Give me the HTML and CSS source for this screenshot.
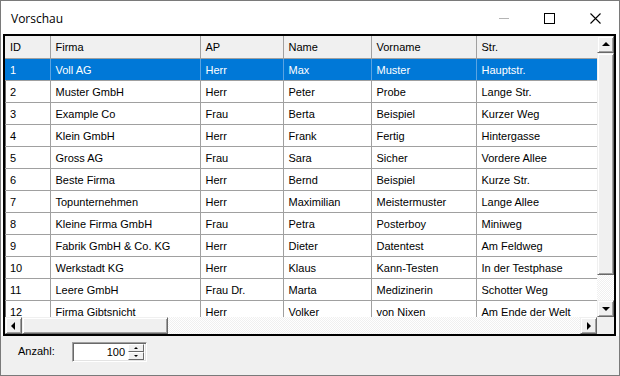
FILE: index.html
```html
<!DOCTYPE html>
<html lang="de">
<head>
  <meta charset="UTF-8">
  <title>Vorschau</title>
  <link rel="stylesheet" href="styles.css">
</head>
<body>
  <div class="fenster">
    <!-- Titelleiste -->
    <div class="titel">
      <span class="titel-text">Vorschau</span>
      <div class="knoepfe">
        <svg class="knopf" width="46" height="32" viewBox="0 0 46 32"><path d="M18 17.5h10" stroke="#b4b4b4" stroke-width="1"/></svg>
        <svg class="knopf" width="46" height="32" viewBox="0 0 46 32"><rect x="17.5" y="12.5" width="10" height="10" fill="none" stroke="#000" stroke-width="1"/></svg>
        <svg class="knopf" width="46" height="32" viewBox="0 0 46 32"><path d="M17.5 12.5l10 10M27.5 12.5l-10 10" stroke="#000" stroke-width="1.1"/></svg>
      </div>
    </div>

    <div class="inhalt">
      <div class="tabelle-rahmen">
        <div class="tabelle">
          <div class="ansicht">
            <table>
              <colgroup>
                <col style="width:45px"><col style="width:150px"><col style="width:83px">
                <col style="width:88px"><col style="width:105px"><col style="width:150px">
              </colgroup>
              <thead>
                <tr><th>ID</th><th>Firma</th><th>AP</th><th>Name</th><th>Vorname</th><th>Str.</th></tr>
              </thead>
              <tbody>
                <tr class="aktiv"><td>1</td><td>Voll AG</td><td>Herr</td><td>Max</td><td>Muster</td><td>Hauptstr.</td></tr>
                <tr><td>2</td><td>Muster GmbH</td><td>Herr</td><td>Peter</td><td>Probe</td><td>Lange Str.</td></tr>
                <tr><td>3</td><td>Example Co</td><td>Frau</td><td>Berta</td><td>Beispiel</td><td>Kurzer Weg</td></tr>
                <tr><td>4</td><td>Klein GmbH</td><td>Herr</td><td>Frank</td><td>Fertig</td><td>Hintergasse</td></tr>
                <tr><td>5</td><td>Gross AG</td><td>Frau</td><td>Sara</td><td>Sicher</td><td>Vordere Allee</td></tr>
                <tr><td>6</td><td>Beste Firma</td><td>Herr</td><td>Bernd</td><td>Beispiel</td><td>Kurze Str.</td></tr>
                <tr><td>7</td><td>Topunternehmen</td><td>Herr</td><td>Maximilian</td><td>Meistermuster</td><td>Lange Allee</td></tr>
                <tr><td>8</td><td>Kleine Firma GmbH</td><td>Frau</td><td>Petra</td><td>Posterboy</td><td>Miniweg</td></tr>
                <tr><td>9</td><td>Fabrik GmbH &amp; Co. KG</td><td>Herr</td><td>Dieter</td><td>Datentest</td><td>Am Feldweg</td></tr>
                <tr><td>10</td><td>Werkstadt KG</td><td>Herr</td><td>Klaus</td><td>Kann-Testen</td><td>In der Testphase</td></tr>
                <tr><td>11</td><td>Leere GmbH</td><td>Frau Dr.</td><td>Marta</td><td>Medizinerin</td><td>Schotter Weg</td></tr>
                <tr><td>12</td><td>Firma Gibtsnicht</td><td>Herr</td><td>Volker</td><td>von Nixen</td><td>Am Ende der Welt</td></tr>
              </tbody>
            </table>
          </div>

          <!-- senkrechte Bildlaufleiste -->
          <div class="vscroll">
            <div class="sbtn"><span class="pfeil hoch"></span></div>
            <div class="vdaumen"></div>
            <div class="spur"></div>
            <div class="sbtn"><span class="pfeil runter"></span></div>
          </div>

          <!-- waagerechte Bildlaufleiste -->
          <div class="hscroll">
            <div class="sbtn"><span class="pfeil links"></span></div>
            <div class="hdaumen"></div>
            <div class="spur"></div>
            <div class="sbtn"><span class="pfeil rechts"></span></div>
          </div>
          <div class="ecke"></div>
        </div>
      </div>

      <!-- untere Leiste -->
      <div class="leiste">
        <span class="label">Anzahl:</span>
        <div class="spin">
          <span class="wert">100</span>
          <div class="spin-knoepfe">
            <div class="spin-knopf"><span class="mini hoch"></span></div>
            <div class="spin-knopf"><span class="mini runter"></span></div>
          </div>
        </div>
      </div>
    </div>
  </div>
</body>
</html>
```

FILE: styles.css
```css
body {
  margin: 0;
  background: #fff;
  font-family: "Liberation Sans", Arial, sans-serif;
}

.fenster {
  width: 620px;
  height: 376px;
  box-sizing: border-box;
  border: 1px solid #7a7a7a;
  background: #fff;
  display: flex;
  flex-direction: column;
}

/* Titelleiste */
.titel {
  height: 32px;
  display: flex;
  align-items: center;
  justify-content: space-between;
  flex-shrink: 0;
}

.titel-text {
  font-family: "Open Sans", "Noto Sans", sans-serif;
  font-size: 12px;
  color: #000;
  padding-left: 10px;
  padding-top: 3px;
}

.knoepfe {
  display: flex;
}

.knopf {
  display: block;
}

.inhalt {
  flex: 1;
  display: flex;
  flex-direction: column;
}

.tabelle-rahmen {
  padding: 1px 3px 0 2px;
}

.tabelle {
  height: 298px;
  border: 2px solid #000;
  box-shadow: inset 1px 1px #696969;
  display: grid;
  grid-template-columns: 1fr 17px;
  grid-template-rows: 1fr 17px;
  background: #fff;
}

.ansicht {
  overflow: hidden;
  min-width: 0;
}

table {
  border-collapse: collapse;
  table-layout: fixed;
  width: 621px;
  font-size: 11px;
  color: #000;
}

th, td {
  height: 22px;
  padding: 0 0 0 5px;
  text-align: left;
  white-space: nowrap;
  overflow: hidden;
  border-right: 1px solid #a0a0a0;
  border-bottom: 1px solid #a0a0a0;
  box-sizing: border-box;
}

th {
  background: #f0f0f0;
  font-weight: normal;
  padding-top: 1px;
}

td {
  padding-top: 1px;
}

tr.aktiv td {
  background: #0078d7;
  color: #fff;
  border-right-color: #5ba4e2;
}

/* Bildlaufleisten */
.vscroll {
  display: flex;
  flex-direction: column;
}

.hscroll {
  display: flex;
}

.sbtn {
  width: 17px;
  height: 17px;
  box-sizing: border-box;
  background: #f0f0f0;
  border: 1px solid;
  border-color: #f0f0f0 #696969 #696969 #f0f0f0;
  box-shadow: inset 1px 1px #fff, inset -1px -1px #a0a0a0;
  display: flex;
  align-items: center;
  justify-content: center;
  flex-shrink: 0;
}

.vdaumen {
  height: 222px;
  background: #f0f0f0;
  box-sizing: border-box;
  border: 1px solid;
  border-color: #f0f0f0 #696969 #696969 #f0f0f0;
  box-shadow: inset 1px 1px #fff, inset -1px -1px #a0a0a0;
}

.hdaumen {
  width: 146px;
  background: #f0f0f0;
  box-sizing: border-box;
  border: 1px solid;
  border-color: #f0f0f0 #696969 #696969 #f0f0f0;
  box-shadow: inset 1px 1px #fff, inset -1px -1px #a0a0a0;
}

.spur {
  flex: 1;
  background-color: #fff;
  background-image: conic-gradient(#f0f0f0 25%, #fff 0 50%, #f0f0f0 0 75%, #fff 0);
  background-size: 2px 2px;
}

.ecke {
  background: #f0f0f0;
}

.pfeil {
  width: 0;
  height: 0;
  border: 4px solid transparent;
}

.pfeil.hoch { border-bottom-color: #000; border-top-width: 0; margin-top: -1px; }
.pfeil.runter { border-top-color: #000; border-bottom-width: 0; }
.pfeil.links { border-right-color: #000; border-left-width: 0; margin-left: -1px; }
.pfeil.rechts { border-left-color: #000; border-right-width: 0; }

/* untere Leiste */
.leiste {
  flex: 1;
  background: #f0f0f0;
  display: flex;
  align-items: flex-start;
  padding: 6px 0 0 17px;
}

.label {
  font-size: 11px;
  color: #000;
  width: 54px;
  line-height: 18px;
}

.spin {
  width: 75px;
  height: 20px;
  box-sizing: border-box;
  border: 1px solid;
  border-color: #a0a0a0 #fff #fff #a0a0a0;
  box-shadow: inset 1px 1px #696969, inset -1px -1px #e3e3e3;
  background: #fff;
  display: flex;
  align-items: center;
  justify-content: flex-end;
}

.wert {
  font-size: 11px;
  color: #000;
  padding-right: 3px;
}

.spin-knoepfe {
  display: flex;
  flex-direction: column;
  width: 16px;
  height: 16px;
  margin-right: 2px;
}

.spin-knopf {
  flex: 1;
  box-sizing: border-box;
  background: #f0f0f0;
  border: 1px solid;
  border-color: #fff #696969 #696969 #fff;
  display: flex;
  align-items: center;
  justify-content: center;
}

.mini {
  width: 0;
  height: 0;
  border: 2px solid transparent;
}

.mini.hoch { border-bottom-color: #000; border-top-width: 0; }
.mini.runter { border-top-color: #000; border-bottom-width: 0; }
```
